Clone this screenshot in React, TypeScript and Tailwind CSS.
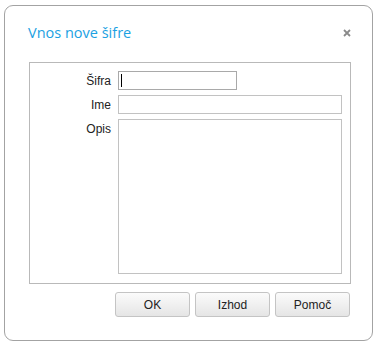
import React from 'react';

const labelFont = { fontFamily: '"Liberation Sans", Arial, sans-serif' };

export default function App() {
  const buttons = ['OK', 'Izhod', 'Pomoč'];

  return (
    <div className="w-[377px] h-[346px] bg-white pt-[5px] pl-[4px]">
      <div className="w-[369px] h-[336px] border border-[#a3a3a3] rounded-[9px] bg-white flex flex-col">
        <div className="flex items-start justify-between pl-[23px] pr-[21px] pt-[17px] h-[56px]">
          <span
            className="text-[14.5px] leading-[20px] text-[#1ba1e2]"
            style={{ fontFamily: '"Open Sans", "Noto Sans", sans-serif' }}
          >
            Vnos nove šifre
          </span>
          <span className="mt-[6px]">
            <svg width="8" height="8" viewBox="0 0 8 8">
              <path d="M1 1L7 7M7 1L1 7" stroke="#8a8a8a" strokeWidth="1.8" />
            </svg>
          </span>
        </div>

        <div className="ml-[24px] w-[322px] h-[222px] border border-[#b9b9b9] pt-[8px] pr-[8px] flex flex-col gap-[5px]">
          <div className="flex items-center h-[19px]">
            <span className="w-[81px] text-right text-[12px] text-[#222]" style={labelFont}>
              Šifra
            </span>
            <div className="ml-[7px] w-[119px] h-[19px] border border-[#a9a9a9] bg-white flex items-center pl-[2px]">
              <div className="w-px h-[13px] bg-black" />
            </div>
          </div>
          <div className="flex items-center h-[19px]">
            <span className="w-[81px] text-right text-[12px] text-[#222]" style={labelFont}>
              Ime
            </span>
            <div className="ml-[7px] flex-1 h-[19px] border border-[#c2c2c2] bg-white" />
          </div>
          <div className="flex items-start">
            <span className="w-[81px] text-right text-[12px] text-[#222] pt-[1px]" style={labelFont}>
              Opis
            </span>
            <div className="ml-[7px] flex-1 h-[155px] border border-[#c2c2c2] bg-white" />
          </div>
        </div>

        <div className="flex gap-[5px] ml-[110px] mt-[8px]">
          {buttons.map((b) => (
            <button
              key={b}
              type="button"
              className="w-[75px] h-[25px] rounded-[3px] border border-[#c4c4c4] bg-gradient-to-b from-[#fbfbfb] to-[#e5e5e5] text-[12px] text-[#222]"
              style={labelFont}
            >
              {b}
            </button>
          ))}
        </div>
      </div>
    </div>
  );
}
